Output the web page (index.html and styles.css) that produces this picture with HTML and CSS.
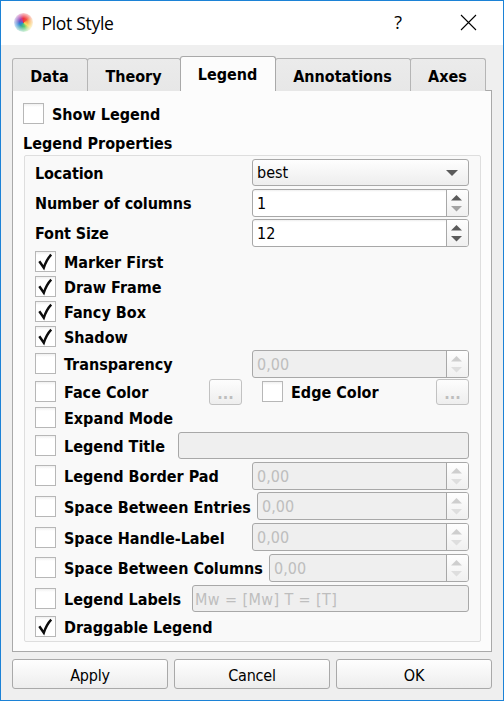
FILE: index.html
```html
<!DOCTYPE html>
<html lang="en">
<head>
<meta charset="utf-8">
<title>Plot Style</title>
<link rel="stylesheet" href="styles.css">
</head>
<body>
<svg class="defs" width="0" height="0">
  <symbol id="tick" viewBox="0 0 21 21"><path d="M4.3 10.2 L8.8 16.8 C10.5 11.5 13 7 16.2 3.6" fill="none" stroke="#0c0c0c" stroke-width="2.4"/></symbol>
  <symbol id="arrows" viewBox="0 0 21 26"><path class="up" d="M4 10.5 L9.5 5 L15 10.5Z"/><path class="down" d="M4 16 L9.5 21.5 L15 16Z"/></symbol>
</svg>
<div class="window">
  <header class="titlebar">
    <i class="logo"></i><span class="title">Plot Style</span>
    <span class="help">?</span>
    <svg class="close" width="17" height="17" viewBox="0 0 17 17"><path d="M1 1L16 16M16 1L1 16" stroke="#000" stroke-width="1.1"/></svg>
  </header>
  <nav class="tabs">
    <div class="tab data">Data</div><div class="tab theory">Theory</div><div class="tab active">Legend</div><div class="tab annotations">Annotations</div><div class="tab axes">Axes</div>
  </nav>
  <main class="pane">
    <div class="row show"><i class="box"></i><span>Show Legend</span></div>
    <h2>Legend Properties</h2>
    <section class="group">
      <div class="row"><b class="name">Location</b><div class="field combo">best<svg width="12" height="6" viewBox="0 0 12 6"><path d="M0 0H12L6 6Z" fill="#5a5a5a"/></svg></div></div>
      <div class="row"><b class="name">Number of columns</b><div class="field spin min">1<svg class="arrows"><use href="#arrows"/></svg></div></div>
      <div class="row"><b class="name">Font Size</b><div class="field spin">12<svg class="arrows"><use href="#arrows"/></svg></div></div>
      <div class="row"><i class="box"><svg><use href="#tick"/></svg></i><span>Marker First</span></div>
      <div class="row"><i class="box"><svg><use href="#tick"/></svg></i><span>Draw Frame</span></div>
      <div class="row"><i class="box"><svg><use href="#tick"/></svg></i><span>Fancy Box</span></div>
      <div class="row"><i class="box"><svg><use href="#tick"/></svg></i><span>Shadow</span></div>
      <div class="row drop3"><i class="box"></i><span>Transparency</span><div class="field spin off">0,00<svg class="arrows"><use href="#arrows"/></svg></div></div>
      <div class="row drop2"><i class="box"></i><span class="face">Face Color</span><div class="picker">...</div><i class="box edge"></i><span>Edge Color</span><div class="picker last">...</div></div>
      <div class="row"><i class="box"></i><span>Expand Mode</span></div>
      <div class="row drop3"><i class="box"></i><span>Legend Title</span><div class="field text off legend-title"></div></div>
      <div class="row drop3"><i class="box"></i><span>Legend Border Pad</span><div class="field spin off">0,00<svg class="arrows"><use href="#arrows"/></svg></div></div>
      <div class="row drop4"><i class="box"></i><span>Space Between Entries</span><div class="field spin off entries">0,00<svg class="arrows"><use href="#arrows"/></svg></div></div>
      <div class="row drop4"><i class="box"></i><span>Space Handle-Label</span><div class="field spin off">0,00<svg class="arrows"><use href="#arrows"/></svg></div></div>
      <div class="row drop3"><i class="box"></i><span>Space Between Columns</span><div class="field spin off columns">0,00<svg class="arrows"><use href="#arrows"/></svg></div></div>
      <div class="row drop3"><i class="box"></i><span>Legend Labels</span><div class="field text off labels">Mw = [Mw] T = [T]</div></div>
      <div class="row"><i class="box"><svg><use href="#tick"/></svg></i><span>Draggable Legend</span></div>
    </section>
  </main>
  <footer class="actions"><div class="action">Apply</div><div class="action">Cancel</div><div class="action">OK</div></footer>
</div>
</body>
</html>
```
FILE: styles.css
```css
* { box-sizing: border-box; }
body { margin: 0; font: 16px/21px "DejaVu Sans Condensed", "DejaVu Sans", sans-serif; color: #000; overflow: hidden; }
.defs { display: block; height: 0; }
.window { width: 504px; height: 701px; border: 1px solid #1c82d6; background: #efefef; }
.titlebar { height: 44px; background: #fff; display: flex; align-items: center; padding: 0 26px 0 13px; font-family: "Open Sans", sans-serif; }
.logo { width: 19px; height: 19px; margin-top: -2px; border-radius: 50%; background: radial-gradient(circle, transparent 30%, rgba(255,255,255,.8) 72%), conic-gradient(#ee3340, #f4503c 45deg, #f8a34b 75deg, #f9dc5b 125deg, #5fcf70 165deg, #3ca99c 210deg, #2685d8 250deg, #7256c2 290deg, #b23aa6 325deg, #ee3340); }
.title { font-size: 17.5px; letter-spacing: -.3px; margin: 0 auto 0 8.5px; }
.help { font-size: 18px; margin: -2px 58px 0 0; }
.close { display: block; margin-top: -1px; }
.tabs { height: 46px; padding: 0 0 0 11px; display: flex; align-items: flex-end; position: relative; z-index: 1; margin-bottom: -1px; }
.tab { height: 33px; border: 1px solid #b5b5b5; border-bottom: 0; border-radius: 3px 3px 0 0; background: linear-gradient(#ebebeb, #e7e7e7); text-align: center; font-weight: bold; line-height: 35px; margin-right: -1px; width: 76px; padding-right: 1px; }
.theory { width: 94px; }
.annotations { width: 136px; }
.tab.active { width: 96px; height: 35px; background: #fcfcfc; border-color: #a9a9a9; z-index: 1; }
.pane { margin: 0 11px; height: 562px; border: 1px solid #a9a9a9; background: #fcfcfc; padding: 12px 10px 0 10px; }
.row { display: flex; align-items: flex-start; font-weight: bold; white-space: nowrap; }
.row > span { line-height: 23px; }
.box { width: 21px; height: 21px; flex: none; border: 1px solid #b7b7b7; background: linear-gradient(#f0f0f0, #fff 3px); margin-right: 8px; }
.box svg { display: block; width: 21px; height: 21px; margin: -1px; }
.show { height: 21px; }
h2 { margin: 8px 0 2px; font-size: 16px; line-height: 21px; padding-top: 1px; height: 21px; }
.group { margin: 0 0 0 1px; height: 487px; border: 1px solid #dedede; border-radius: 2px; background: #f9f9f9; padding: 3px 11px 0 10px; display: grid; grid-template-rows: 30px 30px 32px 25px 25px 25px 24px 29px 28px 25px 30px 30px 31px 31px 31px 31px 21px; }
.name { line-height: 29px; letter-spacing: -.1px; }
.drop2 > .box, .drop2 > span { margin-top: 2px; }
.drop3 > .box, .drop3 > span { margin-top: 3px; }
.drop4 > .box, .drop4 > span { margin-top: 4px; }
.field { margin-left: auto; width: 217px; height: 28px; border: 1px solid #a8a8a8; border-radius: 3px; background: linear-gradient(#eee, #fff 2px); font-weight: normal; padding-left: 4px; line-height: 28px; display: flex; justify-content: space-between; }
.combo, .text { height: 27px; line-height: 28px; }
.combo { background: linear-gradient(#fefefe, #ededed); align-items: center; padding-right: 10px; }
.arrows { width: 22px; height: 26px; border-left: 1px solid #a8a8a8; background: linear-gradient(#fefefe, #f0f0f0); border-radius: 0 2px 2px 0; --up: #5a5a5a; --down: #5a5a5a; }
.up { fill: var(--up); }
.down { fill: var(--down); }
.min .arrows { --down: #a3a3a3; }
.off { background: #efefef; color: #bebebe; }
.off .arrows { --up: #cecece; --down: #dedede; }
.entries { width: 212px; }
.columns { width: 200px; }
.legend-title { width: 291px; }
.labels { width: 277px; padding-left: 2px; letter-spacing: .4px; }
.picker { width: 33px; height: 26px; border: 1px solid #c2c2c2; border-radius: 3px; background: linear-gradient(#fdfdfd, #eee); color: #bebebe; text-align: center; line-height: 27px; }
.face { width: 145px; }
.edge { margin-left: 20px; }
.last { margin-left: auto; }
.actions { display: flex; gap: 6px; padding: 7px 11px 0; }
.action { width: 156px; height: 30px; border: 1px solid #a9a9a9; border-radius: 3px; background: linear-gradient(#fefefe, #ededed); text-align: center; line-height: 31px; letter-spacing: -.2px; }
```
